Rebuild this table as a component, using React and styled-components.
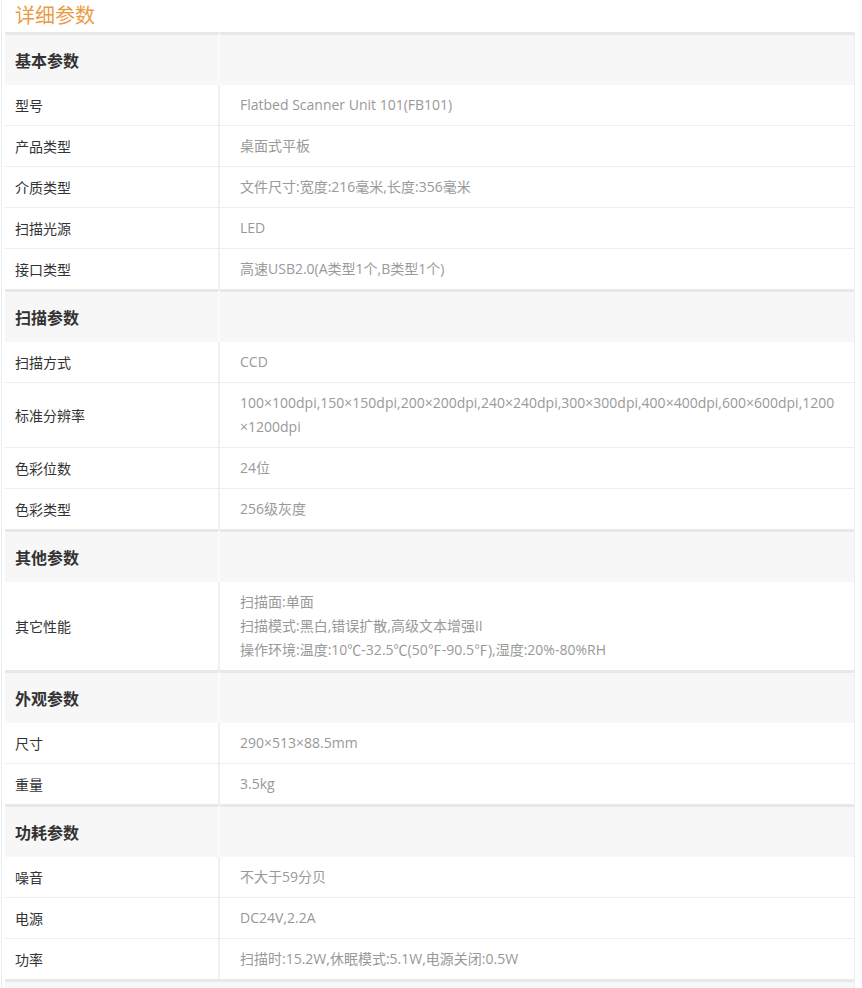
import React from 'react'
import styled, { createGlobalStyle } from 'styled-components'

const GlobalStyle = createGlobalStyle`
	html, body {
		margin: 0;
		padding: 0;
		background: #fff;
	}
	body {
		font-family: "Open Sans", "Noto Sans CJK SC", sans-serif;
	}
`

const Page = styled.div`
	margin-left: 1px;
	padding: 0 7px 0 3px;
	border-left: 1px solid #e3eef5;
`

const Title = styled.h3`
	margin: 0;
	padding: 2px 0 0 10px;
	height: 32px;
	box-sizing: border-box;
	font-size: 20px;
	line-height: 26px;
	font-weight: normal;
	color: #eb9a46;
	font-family: "Noto Sans CJK SC", sans-serif;
`

const Table = styled.table`
	width: 850px;
	border-collapse: separate;
	border-spacing: 0;
	table-layout: fixed;
	border-right: 1px solid #eee;
	font-size: 14px;
`

const Section = styled.tbody`
	tr:first-child td {
		border-top: 3px solid #e8e8e8;
	}
`

const HeadCell = styled.td`
	height: 53px;
	padding: 0 10px;
	background: #f7f7f7;
	font-size: 16px;
	font-weight: bold;
	color: #333;
	box-sizing: border-box;
	font-family: "Noto Sans CJK SC", sans-serif;
	border-right: ${(p) => (p.$label ? '2px solid #fbfbfb' : 'none')};
	width: ${(p) => (p.$label ? '215px' : 'auto')};
`

const Label = styled.td`
	padding: 8px 10px;
	line-height: 24px;
	color: #333;
	vertical-align: middle;
	border-bottom: 1px solid #eee;
	border-right: 2px solid #f0f0f0;
	font-family: "Noto Sans CJK SC", sans-serif;
`

const Value = styled.td`
	padding: 8px 2px 8px 20px;
	line-height: 24px;
	color: #999;
	vertical-align: middle;
	border-bottom: 1px solid #eee;
	word-break: break-all;
`

const Row = styled.tr`
	&:last-child td {
		border-bottom: none;
	}
`

const FootCell = styled.td`
	height: 20px;
	border-top: 3px solid #e8e8e8;
	background: #f7f7f7;
`

const specs = [
	{
		title: '基本参数',
		rows: [
			['型号', 'Flatbed Scanner Unit 101(FB101)'],
			['产品类型', '桌面式平板'],
			['介质类型', '文件尺寸:宽度:216毫米,长度:356毫米'],
			['扫描光源', 'LED'],
			['接口类型', '高速USB2.0(A类型1个,B类型1个)']
		]
	},
	{
		title: '扫描参数',
		rows: [
			['扫描方式', 'CCD'],
			['标准分辨率', ['100×100dpi,150×150dpi,200×200dpi,240×240dpi,300×300dpi,400×400dpi,600×600dpi,1200', '×1200dpi']],
			['色彩位数', '24位'],
			['色彩类型', '256级灰度']
		]
	},
	{
		title: '其他参数',
		rows: [
			['其它性能', ['扫描面:单面', '扫描模式:黑白,错误扩散,高级文本增强II', '操作环境:温度:10℃-32.5℃(50℉-90.5℉),湿度:20%-80%RH']]
		]
	},
	{
		title: '外观参数',
		rows: [
			['尺寸', '290×513×88.5mm'],
			['重量', '3.5kg']
		]
	},
	{
		title: '功耗参数',
		rows: [
			['噪音', '不大于59分贝'],
			['电源', 'DC24V,2.2A'],
			['功率', '扫描时:15.2W,休眠模式:5.1W,电源关闭:0.5W']
		]
	}
]

function App() {
	return (
		<Page>
			<GlobalStyle />
			<Title>详细参数</Title>
			<Table>
				{specs.map((sec) => (
					<Section key={sec.title}>
						<tr>
							<HeadCell $label>{sec.title}</HeadCell>
							<HeadCell />
						</tr>
						{sec.rows.map(([label, value]) => (
							<Row key={label}>
								<Label>{label}</Label>
								<Value>
									{Array.isArray(value)
										? value.map((line, i) => (
												<React.Fragment key={i}>
													{i > 0 && <br />}
													{line}
												</React.Fragment>
										  ))
										: value}
								</Value>
							</Row>
						))}
					</Section>
				))}
				<tfoot>
					<tr>
						<FootCell />
						<FootCell />
					</tr>
				</tfoot>
			</Table>
		</Page>
	)
}

export default App
